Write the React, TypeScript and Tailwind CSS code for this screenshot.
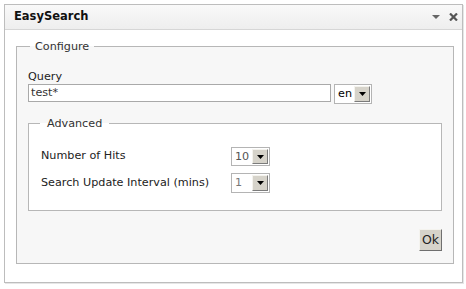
import React from "react";

function Arrow() {
  return (
    <div className="flex h-full w-[16px] items-center justify-center border border-t-[#f4f3ee] border-l-[#f4f3ee] border-r-[#7b7b7b] border-b-[#7b7b7b] bg-[#d6d3ca]">
      <svg width="7" height="4" viewBox="0 0 7 4">
        <polygon points="0,0 7,0 3.5,4" fill="#000" />
      </svg>
    </div>
  );
}

function Dropdown({ value, className, textClass }: { value: string; className: string; textClass: string }) {
  return (
    <div className={`flex border border-[#b4b4b4] bg-white p-px ${className}`}>
      <span className={`flex-1 pl-[2px] leading-[16px] ${textClass}`}>{value}</span>
      <Arrow />
    </div>
  );
}

export default function App() {
  return (
    <div
      className="h-[289px] w-[466px] bg-white pl-[4px] pt-[4px] text-[11.2px] text-[#222]"
      style={{ fontFamily: '"DejaVu Sans", Verdana, sans-serif' }}
    >
      <div className="flex h-[279px] w-[459px] flex-col border border-[#bdbdbd] bg-white shadow-[1px_1px_0_#e6e6e6]">
        {/* HEADER */}
        <div className="flex h-[25px] items-center justify-between border-b border-[#d6d6d6] bg-gradient-to-b from-[#f9f9f9] to-[#eeeeee] pl-[9px] pr-[4px]">
          <span className="text-[11.5px] font-bold text-[#111]">EasySearch</span>
          <div className="flex items-center gap-[9px]">
            <svg width="8" height="4" viewBox="0 0 8 4">
              <polygon points="0,0 8,0 4,4" fill="#666" />
            </svg>
            <svg width="9" height="8" viewBox="0 0 9 8">
              <path d="M1 0.5 L8 7.5 M8 0.5 L1 7.5" stroke="#555" strokeWidth="2.2" />
            </svg>
          </div>
        </div>

        {/* BODY */}
        <div className="pl-[11px] pt-[10px]">
          <fieldset className="h-[224px] w-[438px] border border-[#b7b7b7] bg-[#f7f7f7] px-[11px] pb-[11px]">
            <legend className="ml-[2px] px-[5px] leading-[13px] text-[#333]">Configure</legend>
            <div className="pt-[17px] leading-[14px]">Query</div>
            <div className="flex items-start gap-[3px]">
              <div className="h-[18px] w-[303px] border border-[#a9a9a9] bg-white pl-[2px] leading-[16px] text-[#333]">
                test*
              </div>
              <Dropdown value="en" className="h-[20px] w-[38px]" textClass="text-black" />
            </div>

            <fieldset className="mt-[13px] h-[94px] w-[414px] border border-[#b7b7b7] bg-white px-[12px]">
              <legend className="ml-[-1px] px-[7px] leading-[13px] text-[#333]">Advanced</legend>
              <div className="grid grid-cols-[190px_auto] items-center gap-y-[7px] pt-[17px]">
                <span>Number of Hits</span>
                <Dropdown value="10" className="h-[19px] w-[39px]" textClass="text-[#555]" />
                <span>Search Update Interval (mins)</span>
                <Dropdown value="1" className="h-[20px] w-[39px]" textClass="text-[#777]" />
              </div>
            </fieldset>

            <div className="mt-[18px] flex justify-end">
              <button className="h-[22px] w-[23px] border border-t-[#f4f3ee] border-l-[#f4f3ee] border-r-[#6f6f6f] border-b-[#6f6f6f] bg-[#d6d3ca] text-[12.5px] leading-[18px] text-[#222]">
                Ok
              </button>
            </div>
          </fieldset>
        </div>
      </div>
    </div>
  );
}
